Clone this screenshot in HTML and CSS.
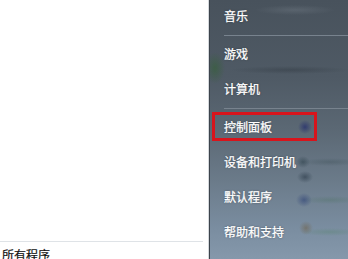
FILE: index.html
```html
<!DOCTYPE html>
<html lang="zh-CN">
<head>
<meta charset="utf-8">
<title>开始菜单</title>
<link rel="stylesheet" href="styles.css">
</head>
<body>
<div class="start">
  <div class="left">
    <div class="divider"></div>
    <div class="all-programs">所有程序</div>
  </div>
  <div class="right">
    <ul class="menu">
      <li class="item">音乐</li>
      <li class="sep"></li>
      <li class="item">游戏</li>
      <li class="item">计算机</li>
      <li class="sep"></li>
      <li class="item highlighted">控制面板<span class="mark"></span></li>
      <li class="item">设备和打印机</li>
      <li class="item">默认程序</li>
      <li class="item">帮助和支持</li>
    </ul>
  </div>
</div>
</body>
</html>
```
FILE: styles.css
```css
html, body {
  margin: 0;
  padding: 0;
  width: 348px;
  height: 259px;
  overflow: hidden;
  background: #ffffff;
}

.start {
  display: flex;
  width: 348px;
  height: 259px;
  font-family: "Noto Sans CJK SC", "Noto Sans", sans-serif;
  font-size: 12px;
}

.left {
  width: 209px;
  flex: none;
  background: #ffffff;
  border-right: 1px solid #d4d8dc;
  padding-top: 241px;
  box-sizing: border-box;
}

.divider {
  height: 1px;
  width: 203px;
  background: #dfe3e7;
}

.all-programs {
  padding-top: 5px;
  padding-left: 2px;
  line-height: 16px;
  color: #111111;
  -webkit-text-stroke: 0.2px #111111;
}

.right {
  flex: 1;
  border-left: 1px solid #3c444c;
  background:
    radial-gradient(ellipse 10px 16px at 5px 68px, rgba(55, 95, 60, 0.7), rgba(55, 95, 60, 0) 100%),
    radial-gradient(ellipse 7px 7px at 95px 127px, rgba(40, 50, 110, 0.8), rgba(40, 50, 110, 0) 100%),
    radial-gradient(ellipse 7px 6px at 93px 162px, rgba(40, 60, 70, 0.55), rgba(40, 60, 70, 0) 100%),
    radial-gradient(ellipse 8px 6px at 95px 177px, rgba(40, 55, 70, 0.6), rgba(40, 55, 70, 0) 100%),
    radial-gradient(ellipse 8px 7px at 94px 200px, rgba(50, 70, 120, 0.65), rgba(50, 70, 120, 0) 100%),
    radial-gradient(ellipse 7px 7px at 96px 228px, rgba(110, 95, 70, 0.55), rgba(110, 95, 70, 0) 100%),
    radial-gradient(ellipse 40px 5px at 85px 10px, rgba(120, 130, 140, 0.35), rgba(120, 130, 140, 0) 100%),
    radial-gradient(ellipse 60px 4px at 80px 70px, rgba(40, 48, 56, 0.35), rgba(40, 48, 56, 0) 100%),
    radial-gradient(ellipse 30px 4px at 120px 162px, rgba(50, 70, 75, 0.3), rgba(50, 70, 75, 0) 100%),
    radial-gradient(ellipse 30px 4px at 120px 200px, rgba(70, 110, 90, 0.3), rgba(70, 110, 90, 0) 100%),
    radial-gradient(ellipse 30px 4px at 120px 232px, rgba(80, 130, 100, 0.3), rgba(80, 130, 100, 0) 100%),
    linear-gradient(180deg, #48525c 0%, #4f5a65 30%, #5b6874 50%, #6b7b8a 70%, #7a8da0 88%, #8598ab 100%);
  overflow: hidden;
}

.menu {
  list-style: none;
  margin: -2.5px 0 0 0;
  padding: 0 0 0 14px;
}

.item {
  position: relative;
  height: 35px;
  line-height: 35px;
  color: #ffffff;
  -webkit-text-stroke: 0.25px #ffffff;
  text-shadow: 0 0 2px rgba(30, 36, 44, 0.6);
  white-space: nowrap;
}

.sep {
  height: 3px;
  box-sizing: border-box;
  border-bottom: 1px solid #78838e;
}

.mark {
  position: absolute;
  left: -12px;
  top: 3.5px;
  width: 105px;
  height: 29px;
  box-sizing: border-box;
  border: 3px solid #d8141c;
}
```
